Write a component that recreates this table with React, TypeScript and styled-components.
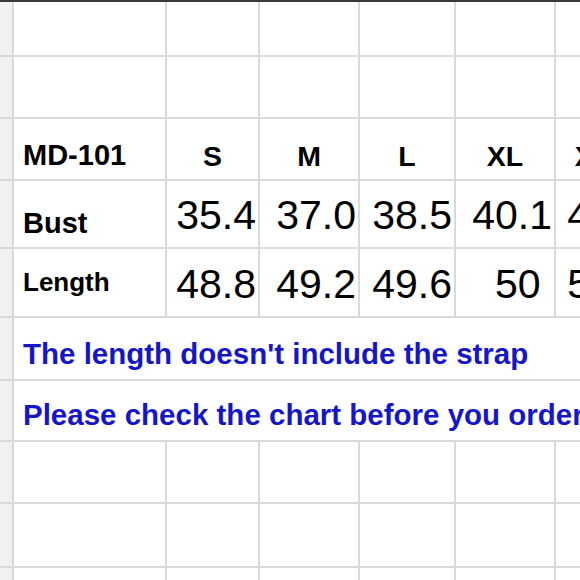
import { createGlobalStyle, styled } from "styled-components";

const GlobalStyle = createGlobalStyle`
  html,
  body {
    margin: 0;
    padding: 0;
    background: #ffffff;
    overflow: hidden;
  }

  body {
    font-family: "Liberation Sans", Arial, sans-serif;
  }
`;

const sizes = ["S", "M", "L", "XL", "XXL"];
const bust = ["35.4", "37.0", "38.5", "40.1", "41.7"];
const length = ["48.8", "49.2", "49.6", "50 ", "50.8"];
const rowHeights = [53, 60, 60, 66, 67, 61, 59, 60, 62, 60];

const Sheet = styled.div`
  display: grid;
  grid-template-columns: 12px 151px 91px 98px 94px 98px 93px;
  grid-template-rows: ${rowHeights.map((h) => `${h}px`).join(" ")};
  gap: 2px;
  width: max-content;
  background: #d9d9d9;
  border-top: 2px solid #3a3a3a;
`;

const Gutter = styled.div`
  background: #f1f1f1;
`;

const Cell = styled.div<{ $span?: number }>`
  display: flex;
  align-items: flex-end;
  min-width: 0;
  padding: 0 0 8px 0;
  background: #ffffff;
  color: #000000;
  white-space: pre;
  line-height: 1.15;
  grid-column: ${(p) => (p.$span ? `span ${p.$span}` : "auto")};
`;

const LabelCell = styled(Cell)<{ $small?: boolean }>`
  padding-left: 9px;
  font-weight: 700;
  font-size: ${(p) => (p.$small ? "26px" : "29px")};
  align-items: ${(p) => (p.$small ? "center" : "flex-end")};
  padding-bottom: ${(p) => (p.$small ? "0" : "7px")};
`;

const HeaderCell = styled(Cell)`
  justify-content: center;
  font-weight: 700;
  font-size: 28.5px;
  padding-bottom: 6px;
`;

const NumberCell = styled(Cell)`
  justify-content: flex-end;
  padding-right: 2px;
  font-size: 41px;
  font-weight: 400;
`;

const NoteCell = styled(Cell)`
  padding-left: 9px;
  color: #1616c8;
  font-weight: 700;
  font-size: 29.5px;
  overflow: hidden;
`;

const EmptyRow = () => (
  <>
    <Gutter />
    {Array.from({ length: 6 }).map((_, i) => (
      <Cell key={i} />
    ))}
  </>
);

const App = (): JSX.Element => {
  return (
    <>
      <GlobalStyle />
      <Sheet>
        <EmptyRow />
        <EmptyRow />

        <Gutter />
        <LabelCell>MD-101</LabelCell>
        {sizes.map((s) => (
          <HeaderCell key={s}>{s}</HeaderCell>
        ))}

        <Gutter />
        <LabelCell>Bust</LabelCell>
        {bust.map((v, i) => (
          <NumberCell key={i}>{v}</NumberCell>
        ))}

        <Gutter />
        <LabelCell $small>Length</LabelCell>
        {length.map((v, i) => (
          <NumberCell key={i}>{v}</NumberCell>
        ))}

        <Gutter />
        <NoteCell $span={6}>The length doesn't include the strap</NoteCell>

        <Gutter />
        <NoteCell $span={6}>Please check the chart before you order</NoteCell>

        <EmptyRow />
        <EmptyRow />
        <EmptyRow />
      </Sheet>
    </>
  );
};

export default App;
